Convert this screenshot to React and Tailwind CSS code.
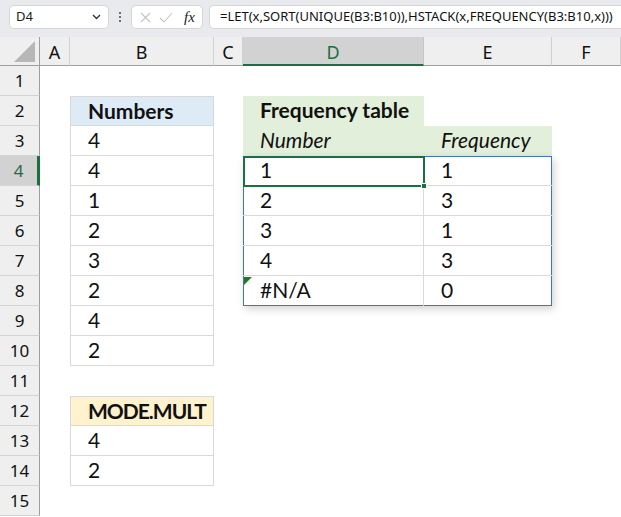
import React from 'react';

const cellFont = { fontFamily: 'Lato, "Open Sans", sans-serif' };
const uiFont = { fontFamily: '"Noto Sans", "Open Sans", sans-serif' };

const numbers = [4, 4, 1, 2, 3, 2, 4, 2];
const freq = [
  ['1', '1'],
  ['2', '3'],
  ['3', '1'],
  ['4', '3'],
  ['#N/A', '0'],
];
const colHeads = ['A', 'B', 'C', 'D', 'E', 'F'];
const rowStarts = [
  'row-start-2', 'row-start-3', 'row-start-4', 'row-start-5', 'row-start-6',
  'row-start-7', 'row-start-8', 'row-start-9', 'row-start-10', 'row-start-11',
  'row-start-12', 'row-start-13', 'row-start-14', 'row-start-15', 'row-start-16',
];

function Toolbar() {
  return (
    <div className="h-[37px] bg-[#e8eaed] flex items-start pt-[5px] pl-[9px] gap-0" style={uiFont}>
      {/* name box */}
      <div className="w-[100px] h-[24px] bg-white rounded-[5px] border border-[#d6d6d6] flex items-center justify-between pl-[6px] pr-[7px]">
        <span className="text-[13px] text-[#222]">D4</span>
        <svg width="9" height="6" viewBox="0 0 9 6">
          <path d="M1 1 L4.5 4.5 L8 1" fill="none" stroke="#333" strokeWidth="1.4" />
        </svg>
      </div>
      <div className="w-[22px] h-[24px] flex flex-col items-center justify-center gap-[2px]">
        <span className="w-[2px] h-[2px] bg-[#444] rounded-full" />
        <span className="w-[2px] h-[2px] bg-[#444] rounded-full" />
        <span className="w-[2px] h-[2px] bg-[#444] rounded-full" />
      </div>
      {/* cancel / enter / fx */}
      <div className="w-[72px] h-[24px] bg-white rounded-[5px] border border-[#d6d6d6] flex items-center pl-[8px] gap-[8px]">
        <svg width="11" height="11" viewBox="0 0 11 11">
          <path d="M1 1 L10 10 M10 1 L1 10" stroke="#c4c4c4" strokeWidth="1.1" />
        </svg>
        <svg width="14" height="11" viewBox="0 0 14 11">
          <path d="M1 6 L5 10 L13 1" fill="none" stroke="#c4c4c4" strokeWidth="1.1" />
        </svg>
        <span className="text-[15px] italic text-[#222] ml-[3px] leading-none" style={{ fontFamily: '"Liberation Serif", serif' }}>
          fx
        </span>
      </div>
      <div className="ml-[6px] flex-1 h-[24px] bg-white rounded-l-[5px] border border-r-0 border-[#d6d6d6] flex items-center pl-[10px]">
        <span className="text-[13px] text-[#111] whitespace-nowrap">
          =LET(x,SORT(UNIQUE(B3:B10)),HSTACK(x,FREQUENCY(B3:B10,x)))
        </span>
      </div>
    </div>
  );
}

function Cell({ children, className = '' }) {
  return (
    <div className={`h-[30px] pl-[17px] text-[21px] leading-[28px] text-[#111] whitespace-nowrap ${className}`}>
      {children}
    </div>
  );
}

export default function App() {
  return (
    <div className="w-[621px] h-[517px] overflow-hidden bg-white">
      <Toolbar />
      <div className="grid grid-cols-[40px_30px_144px_29px_181px_128px_69px] grid-rows-[29px_repeat(15,30px)]">
        {/* corner */}
        <div className="col-start-1 row-start-1 bg-[#efefef] border-r border-b border-[#9e9e9e] flex items-end justify-end pr-[4px] pb-[3px]">
          <svg width="21" height="21" viewBox="0 0 21 21">
            <path d="M21 0 L21 21 L0 21 Z" fill="#b7b7b7" />
          </svg>
        </div>
        {/* column headers */}
        {colHeads.map((c, i) => {
          const sel = c === 'D';
          const start = ['col-start-2', 'col-start-3', 'col-start-4', 'col-start-5', 'col-start-6', 'col-start-7'][i];
          return (
            <div
              key={c}
              style={uiFont}
              className={`${start} row-start-1 flex justify-center pt-[1px] text-[18px] leading-[29px] ${
                sel
                  ? 'bg-[#d2d2d2] text-[#1e6e43] border-b-2 border-b-[#1e6e43] border-r border-r-[#c6c6c6]'
                  : 'bg-[#efefef] text-[#111] border-b border-b-[#9e9e9e] border-r border-r-[#d0d0d0]'
              }`}
            >
              {c}
            </div>
          );
        })}
        {/* row headers */}
        {rowStarts.map((rs, i) => {
          const sel = i === 3;
          return (
            <div
              key={rs}
              style={uiFont}
              className={`col-start-1 ${rs} flex justify-center text-[17px] leading-[30px] border-b border-b-[#d4d4d4] ${
                sel
                  ? 'bg-[#d2d2d2] text-[#1e6e43] border-r-[3px] border-r-[#1e6e43]'
                  : 'bg-[#efefef] text-[#111] border-r border-r-[#9e9e9e]'
              }`}
            >
              {i + 1}
            </div>
          );
        })}

        {/* Numbers table B2:B10 */}
        <div className="col-start-3 row-start-3 row-span-9 flex flex-col border-l border-r border-[#d9d9d9]" style={cellFont}>
          <Cell className="bg-[#ddebf7] font-bold border-t border-b border-[#d9d9d9]">Numbers</Cell>
          {numbers.map((n, i) => (
            <Cell key={i} className="border-b border-[#d9d9d9]">{n}</Cell>
          ))}
        </div>

        {/* MODE.MULT B12:B14 */}
        <div className="col-start-3 row-start-13 row-span-3 flex flex-col border-l border-r border-[#d9d9d9]" style={cellFont}>
          <Cell className="bg-[#fff2cc] font-bold tracking-[-1px] border-t border-b border-[#d9d9d9]">MODE.MULT</Cell>
          <Cell className="border-b border-[#d9d9d9]">4</Cell>
          <Cell className="border-b border-[#d9d9d9]">2</Cell>
        </div>

        {/* Frequency table */}
        <div className="col-start-5 row-start-3" style={cellFont}>
          <Cell className="bg-[#e2efda] font-bold">Frequency table</Cell>
        </div>
        <div className="col-start-5 col-span-2 row-start-4 grid grid-cols-[181px_128px] bg-[#e2efda]" style={cellFont}>
          <Cell className="italic">Number</Cell>
          <Cell className="italic">Frequency</Cell>
        </div>
        <div
          className="col-start-5 col-span-2 row-start-5 row-span-5 relative ring-1 ring-inset ring-[#4472c4] shadow-[2px_3px_8px_rgba(0,0,0,0.18)] flex flex-col"
          style={cellFont}
        >
          {freq.map(([a, b], i) => (
            <div key={i} className={`grid grid-cols-[181px_128px] h-[30px] ${i < freq.length - 1 ? 'border-b border-[#d9d9d9]' : ''}`}>
              <Cell className="border-r border-[#d9d9d9] h-[29px] leading-[27px] relative">
                {i === 4 && (
                  <span className="absolute left-[1px] top-[1px] w-0 h-0 border-t-[8px] border-t-[#1f7a1f] border-r-[8px] border-r-transparent" />
                )}
                {a}
              </Cell>
              <Cell className="h-[29px] leading-[27px]">{b}</Cell>
            </div>
          ))}
          {/* active cell D4 */}
          <div className="absolute left-0 top-0 w-[182px] h-[31px] border-2 border-[#1e6e43] pointer-events-none">
            <span className="absolute right-[-4px] bottom-[-4px] w-[6px] h-[6px] bg-[#1e6e43] border border-white" />
          </div>
        </div>
      </div>
    </div>
  );
}
